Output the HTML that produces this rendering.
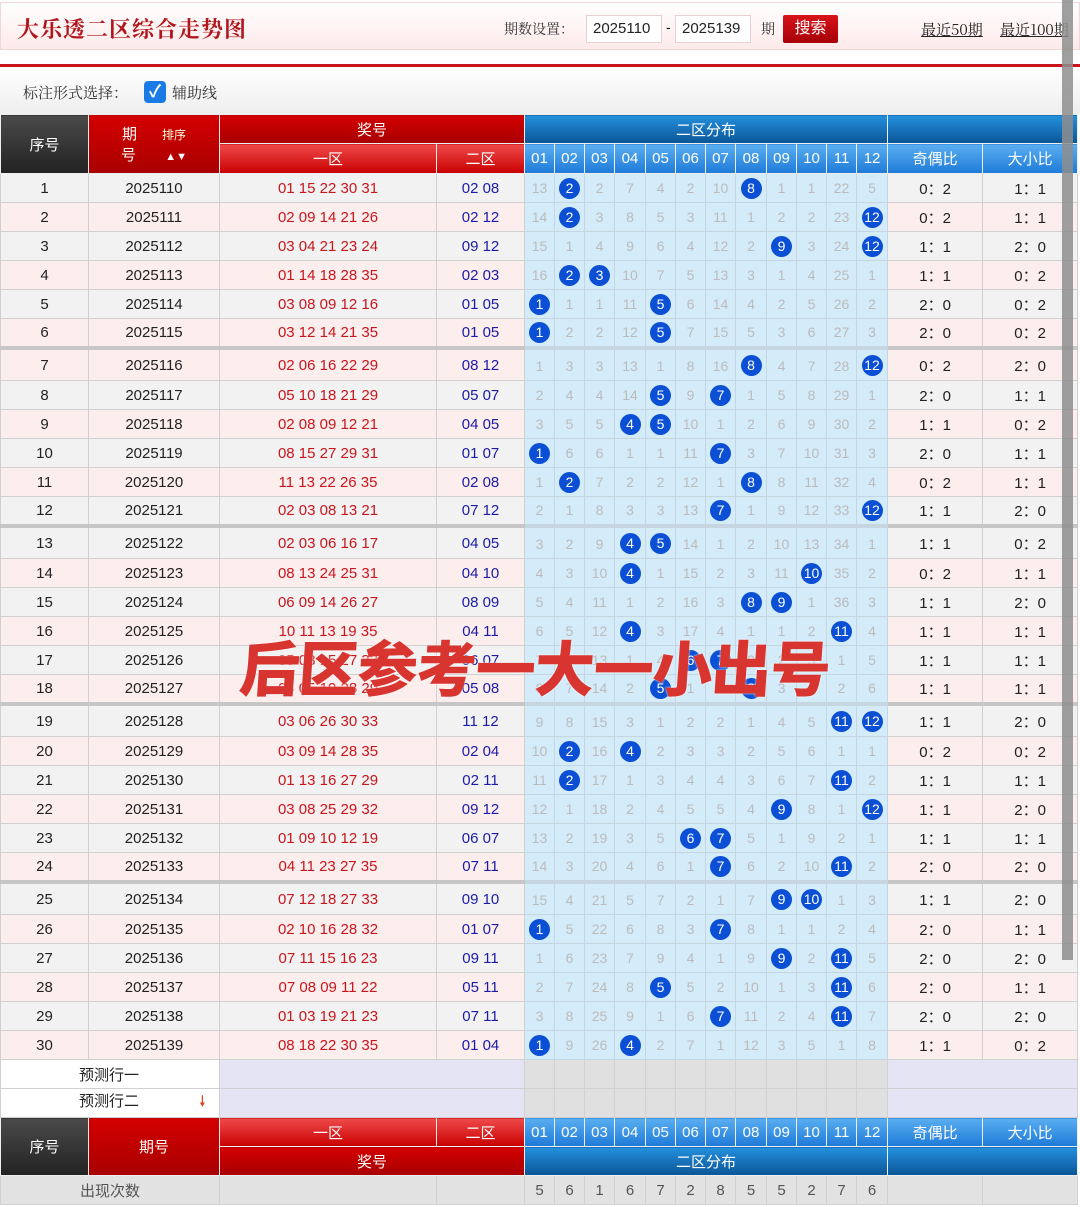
<!DOCTYPE html>
<html><head><meta charset="utf-8"><style>
*{margin:0;padding:0;box-sizing:border-box}
body{width:1080px;height:1207px;overflow:hidden;background:#fff;font-family:"Liberation Sans","Noto Sans CJK SC",sans-serif;position:relative}
.top{position:absolute;left:0;top:2px;width:1080px;height:48px;border:1px solid #f0d8d8;background:linear-gradient(#fff,#fdeaea)}
.title{position:absolute;left:16px;top:10px;font-size:22px;color:#b0161c;font-family:"Noto Serif CJK SC","Noto Sans CJK SC",serif;font-weight:bold;letter-spacing:1px}
.qs{position:absolute;left:503px;top:16px;font-size:14px;color:#333;font-family:"Noto Serif CJK SC",serif}
.inp{position:absolute;top:12px;height:28px;width:76px;background:#fff;border:1px solid #ead0d0;font-size:15px;line-height:26px;padding-left:6px;color:#222}
.btn{position:absolute;left:782px;top:12px;width:55px;height:28px;background:linear-gradient(#d7141a,#a60008);color:#fff;font-size:16px;text-align:center;line-height:27px;border-radius:2px}
.lnk{position:absolute;top:16px;font-size:15px;color:#222;text-decoration:underline;font-family:"Noto Serif CJK SC",serif}
.redline{position:absolute;left:0;top:64px;width:1080px;height:3px;background:#c8141b}
.opt{position:absolute;left:0;top:67px;width:1080px;height:47px;background:linear-gradient(#fff,#eee)}
.opt span{position:absolute;top:15px;font-size:15px;color:#333;font-family:"Noto Serif CJK SC",serif}
.cb{position:absolute;left:144px;top:81px;width:22px;height:22px;background:#1a7be6;border-radius:4px;color:#fff;font-size:17px;text-align:center;line-height:22px;font-weight:bold}
table{position:absolute;left:0;top:114px;border-collapse:collapse;table-layout:fixed;width:1077px}
td{border:1px solid #d0d0d0;text-align:center;font-size:15px;color:#222;height:29px;padding:0;white-space:nowrap;overflow:hidden}
.h td{color:#fff;border-color:#eee;font-size:15px}
.dk{background:linear-gradient(#4a4a4a,#222)}
.rd{background:linear-gradient(#d40000,#a80000)}
.lr{background:linear-gradient(#ef4a4a,#c80000)}
.db{background:linear-gradient(#2590de,#0a5597)}
.lb{background:linear-gradient(#5aaef0,#1e7ad8)}
.f{color:#c8161d}.k{color:#1b1ba8}
tr.o td{background:#f2f2f2}tr.e td{background:#fdeeee}
tr.d td:nth-child(n+5):nth-child(-n+16){background:#d4ebfa;color:#bbb;border-color:#c6d6e0;font-size:14px}
tr.d td b{display:inline-block;width:21px;height:21px;border-radius:50%;background:#0b4fd4;color:#fff;font-weight:normal;font-size:14px;line-height:21px}
tr.s td{border-top:4px solid #c6c6c6;height:33px;padding-top:2px}
.p td{background:#e4e4f4;height:29px}
.p td.w{background:#fff;text-align:left;padding-left:78px}
.p td.g{background:#e0e0e0}
.c td{background:#e2e2e2;color:#555}
.wm{position:absolute;left:240px;top:622px;font-size:60px;font-weight:900;color:#d83430;font-family:"Noto Sans CJK SC",sans-serif;letter-spacing:-1px;transform:skewX(-4deg);text-shadow:0 0 2px #fff}
.sb{position:absolute;left:1062px;top:0;width:11px;height:960px;background:#8e8e8e;opacity:.85}
</style></head><body>
<div class="top"><div class="title">大乐透二区综合走势图</div>
<div class="qs">期数设置：</div>
<div class="inp" style="left:585px">2025110</div><div style="position:absolute;left:665px;top:16px;font-size:14px">-</div>
<div class="inp" style="left:674px">2025139</div><div class="qs" style="left:760px">期</div>
<div class="btn">搜索</div>
<div class="lnk" style="left:920px">最近50期</div><div class="lnk" style="left:999px">最近100期</div></div>
<div class="redline"></div>
<div class="opt"><span style="left:23px">标注形式选择：</span><span style="left:172px">辅助线</span></div>
<div class="cb">✓</div>
<table>
<colgroup><col style="width:88px"><col style="width:131px"><col style="width:217px"><col style="width:88px"><col style="width:30px"><col style="width:30px"><col style="width:30px"><col style="width:31px"><col style="width:30px"><col style="width:30px"><col style="width:30px"><col style="width:31px"><col style="width:30px"><col style="width:30px"><col style="width:30px"><col style="width:31px"><col style="width:95px"><col style="width:95px"></colgroup>
<tr class="h"><td rowspan="2" class="dk" style="height:28px">序号</td><td rowspan="2" class="rd">期&nbsp;&nbsp;&nbsp;&nbsp;&nbsp;&nbsp;<span style="font-size:12px;color:#ffd">排序</span><br>号&nbsp;&nbsp;&nbsp;&nbsp;&nbsp;&nbsp;&nbsp;<span style="font-size:11px">▲▼</span></td><td colspan="2" class="rd">奖号</td><td colspan="12" class="db">二区分布</td><td colspan="2" class="db"></td></tr>
<tr class="h"><td class="lr" style="height:30px">一区</td><td class="lr">二区</td><td class="lb">01</td><td class="lb">02</td><td class="lb">03</td><td class="lb">04</td><td class="lb">05</td><td class="lb">06</td><td class="lb">07</td><td class="lb">08</td><td class="lb">09</td><td class="lb">10</td><td class="lb">11</td><td class="lb">12</td><td class="lb">奇偶比</td><td class="lb">大小比</td></tr>
<tr class="d o"><td>1</td><td>2025110</td><td class="f">01 15 22 30 31</td><td class="k">02 08</td><td>13</td><td><b>2</b></td><td>2</td><td>7</td><td>4</td><td>2</td><td>10</td><td><b>8</b></td><td>1</td><td>1</td><td>22</td><td>5</td><td>0：2</td><td>1：1</td></tr>
<tr class="d e"><td>2</td><td>2025111</td><td class="f">02 09 14 21 26</td><td class="k">02 12</td><td>14</td><td><b>2</b></td><td>3</td><td>8</td><td>5</td><td>3</td><td>11</td><td>1</td><td>2</td><td>2</td><td>23</td><td><b>12</b></td><td>0：2</td><td>1：1</td></tr>
<tr class="d o"><td>3</td><td>2025112</td><td class="f">03 04 21 23 24</td><td class="k">09 12</td><td>15</td><td>1</td><td>4</td><td>9</td><td>6</td><td>4</td><td>12</td><td>2</td><td><b>9</b></td><td>3</td><td>24</td><td><b>12</b></td><td>1：1</td><td>2：0</td></tr>
<tr class="d e"><td>4</td><td>2025113</td><td class="f">01 14 18 28 35</td><td class="k">02 03</td><td>16</td><td><b>2</b></td><td><b>3</b></td><td>10</td><td>7</td><td>5</td><td>13</td><td>3</td><td>1</td><td>4</td><td>25</td><td>1</td><td>1：1</td><td>0：2</td></tr>
<tr class="d o"><td>5</td><td>2025114</td><td class="f">03 08 09 12 16</td><td class="k">01 05</td><td><b>1</b></td><td>1</td><td>1</td><td>11</td><td><b>5</b></td><td>6</td><td>14</td><td>4</td><td>2</td><td>5</td><td>26</td><td>2</td><td>2：0</td><td>0：2</td></tr>
<tr class="d e"><td>6</td><td>2025115</td><td class="f">03 12 14 21 35</td><td class="k">01 05</td><td><b>1</b></td><td>2</td><td>2</td><td>12</td><td><b>5</b></td><td>7</td><td>15</td><td>5</td><td>3</td><td>6</td><td>27</td><td>3</td><td>2：0</td><td>0：2</td></tr>
<tr class="d e s"><td>7</td><td>2025116</td><td class="f">02 06 16 22 29</td><td class="k">08 12</td><td>1</td><td>3</td><td>3</td><td>13</td><td>1</td><td>8</td><td>16</td><td><b>8</b></td><td>4</td><td>7</td><td>28</td><td><b>12</b></td><td>0：2</td><td>2：0</td></tr>
<tr class="d o"><td>8</td><td>2025117</td><td class="f">05 10 18 21 29</td><td class="k">05 07</td><td>2</td><td>4</td><td>4</td><td>14</td><td><b>5</b></td><td>9</td><td><b>7</b></td><td>1</td><td>5</td><td>8</td><td>29</td><td>1</td><td>2：0</td><td>1：1</td></tr>
<tr class="d e"><td>9</td><td>2025118</td><td class="f">02 08 09 12 21</td><td class="k">04 05</td><td>3</td><td>5</td><td>5</td><td><b>4</b></td><td><b>5</b></td><td>10</td><td>1</td><td>2</td><td>6</td><td>9</td><td>30</td><td>2</td><td>1：1</td><td>0：2</td></tr>
<tr class="d o"><td>10</td><td>2025119</td><td class="f">08 15 27 29 31</td><td class="k">01 07</td><td><b>1</b></td><td>6</td><td>6</td><td>1</td><td>1</td><td>11</td><td><b>7</b></td><td>3</td><td>7</td><td>10</td><td>31</td><td>3</td><td>2：0</td><td>1：1</td></tr>
<tr class="d e"><td>11</td><td>2025120</td><td class="f">11 13 22 26 35</td><td class="k">02 08</td><td>1</td><td><b>2</b></td><td>7</td><td>2</td><td>2</td><td>12</td><td>1</td><td><b>8</b></td><td>8</td><td>11</td><td>32</td><td>4</td><td>0：2</td><td>1：1</td></tr>
<tr class="d o"><td>12</td><td>2025121</td><td class="f">02 03 08 13 21</td><td class="k">07 12</td><td>2</td><td>1</td><td>8</td><td>3</td><td>3</td><td>13</td><td><b>7</b></td><td>1</td><td>9</td><td>12</td><td>33</td><td><b>12</b></td><td>1：1</td><td>2：0</td></tr>
<tr class="d o s"><td>13</td><td>2025122</td><td class="f">02 03 06 16 17</td><td class="k">04 05</td><td>3</td><td>2</td><td>9</td><td><b>4</b></td><td><b>5</b></td><td>14</td><td>1</td><td>2</td><td>10</td><td>13</td><td>34</td><td>1</td><td>1：1</td><td>0：2</td></tr>
<tr class="d e"><td>14</td><td>2025123</td><td class="f">08 13 24 25 31</td><td class="k">04 10</td><td>4</td><td>3</td><td>10</td><td><b>4</b></td><td>1</td><td>15</td><td>2</td><td>3</td><td>11</td><td><b>10</b></td><td>35</td><td>2</td><td>0：2</td><td>1：1</td></tr>
<tr class="d o"><td>15</td><td>2025124</td><td class="f">06 09 14 26 27</td><td class="k">08 09</td><td>5</td><td>4</td><td>11</td><td>1</td><td>2</td><td>16</td><td>3</td><td><b>8</b></td><td><b>9</b></td><td>1</td><td>36</td><td>3</td><td>1：1</td><td>2：0</td></tr>
<tr class="d e"><td>16</td><td>2025125</td><td class="f">10 11 13 19 35</td><td class="k">04 11</td><td>6</td><td>5</td><td>12</td><td><b>4</b></td><td>3</td><td>17</td><td>4</td><td>1</td><td>1</td><td>2</td><td><b>11</b></td><td>4</td><td>1：1</td><td>1：1</td></tr>
<tr class="d o"><td>17</td><td>2025126</td><td class="f">05 08 15 27 33</td><td class="k">06 07</td><td>7</td><td>6</td><td>13</td><td>1</td><td>4</td><td><b>6</b></td><td><b>7</b></td><td>2</td><td>2</td><td>3</td><td>1</td><td>5</td><td>1：1</td><td>1：1</td></tr>
<tr class="d e"><td>18</td><td>2025127</td><td class="f">04 05 19 28 29</td><td class="k">05 08</td><td>8</td><td>7</td><td>14</td><td>2</td><td><b>5</b></td><td>1</td><td>1</td><td><b>8</b></td><td>3</td><td>4</td><td>2</td><td>6</td><td>1：1</td><td>1：1</td></tr>
<tr class="d o s"><td>19</td><td>2025128</td><td class="f">03 06 26 30 33</td><td class="k">11 12</td><td>9</td><td>8</td><td>15</td><td>3</td><td>1</td><td>2</td><td>2</td><td>1</td><td>4</td><td>5</td><td><b>11</b></td><td><b>12</b></td><td>1：1</td><td>2：0</td></tr>
<tr class="d e"><td>20</td><td>2025129</td><td class="f">03 09 14 28 35</td><td class="k">02 04</td><td>10</td><td><b>2</b></td><td>16</td><td><b>4</b></td><td>2</td><td>3</td><td>3</td><td>2</td><td>5</td><td>6</td><td>1</td><td>1</td><td>0：2</td><td>0：2</td></tr>
<tr class="d o"><td>21</td><td>2025130</td><td class="f">01 13 16 27 29</td><td class="k">02 11</td><td>11</td><td><b>2</b></td><td>17</td><td>1</td><td>3</td><td>4</td><td>4</td><td>3</td><td>6</td><td>7</td><td><b>11</b></td><td>2</td><td>1：1</td><td>1：1</td></tr>
<tr class="d e"><td>22</td><td>2025131</td><td class="f">03 08 25 29 32</td><td class="k">09 12</td><td>12</td><td>1</td><td>18</td><td>2</td><td>4</td><td>5</td><td>5</td><td>4</td><td><b>9</b></td><td>8</td><td>1</td><td><b>12</b></td><td>1：1</td><td>2：0</td></tr>
<tr class="d o"><td>23</td><td>2025132</td><td class="f">01 09 10 12 19</td><td class="k">06 07</td><td>13</td><td>2</td><td>19</td><td>3</td><td>5</td><td><b>6</b></td><td><b>7</b></td><td>5</td><td>1</td><td>9</td><td>2</td><td>1</td><td>1：1</td><td>1：1</td></tr>
<tr class="d e"><td>24</td><td>2025133</td><td class="f">04 11 23 27 35</td><td class="k">07 11</td><td>14</td><td>3</td><td>20</td><td>4</td><td>6</td><td>1</td><td><b>7</b></td><td>6</td><td>2</td><td>10</td><td><b>11</b></td><td>2</td><td>2：0</td><td>2：0</td></tr>
<tr class="d o s"><td>25</td><td>2025134</td><td class="f">07 12 18 27 33</td><td class="k">09 10</td><td>15</td><td>4</td><td>21</td><td>5</td><td>7</td><td>2</td><td>1</td><td>7</td><td><b>9</b></td><td><b>10</b></td><td>1</td><td>3</td><td>1：1</td><td>2：0</td></tr>
<tr class="d e"><td>26</td><td>2025135</td><td class="f">02 10 16 28 32</td><td class="k">01 07</td><td><b>1</b></td><td>5</td><td>22</td><td>6</td><td>8</td><td>3</td><td><b>7</b></td><td>8</td><td>1</td><td>1</td><td>2</td><td>4</td><td>2：0</td><td>1：1</td></tr>
<tr class="d o"><td>27</td><td>2025136</td><td class="f">07 11 15 16 23</td><td class="k">09 11</td><td>1</td><td>6</td><td>23</td><td>7</td><td>9</td><td>4</td><td>1</td><td>9</td><td><b>9</b></td><td>2</td><td><b>11</b></td><td>5</td><td>2：0</td><td>2：0</td></tr>
<tr class="d e"><td>28</td><td>2025137</td><td class="f">07 08 09 11 22</td><td class="k">05 11</td><td>2</td><td>7</td><td>24</td><td>8</td><td><b>5</b></td><td>5</td><td>2</td><td>10</td><td>1</td><td>3</td><td><b>11</b></td><td>6</td><td>2：0</td><td>1：1</td></tr>
<tr class="d o"><td>29</td><td>2025138</td><td class="f">01 03 19 21 23</td><td class="k">07 11</td><td>3</td><td>8</td><td>25</td><td>9</td><td>1</td><td>6</td><td><b>7</b></td><td>11</td><td>2</td><td>4</td><td><b>11</b></td><td>7</td><td>2：0</td><td>2：0</td></tr>
<tr class="d e"><td>30</td><td>2025139</td><td class="f">08 18 22 30 35</td><td class="k">01 04</td><td><b>1</b></td><td>9</td><td>26</td><td><b>4</b></td><td>2</td><td>7</td><td>1</td><td>12</td><td>3</td><td>5</td><td>1</td><td>8</td><td>1：1</td><td>0：2</td></tr>
<tr class="p"><td colspan="2" class="w">预测行一</td><td colspan="2"></td><td class="g"></td><td class="g"></td><td class="g"></td><td class="g"></td><td class="g"></td><td class="g"></td><td class="g"></td><td class="g"></td><td class="g"></td><td class="g"></td><td class="g"></td><td class="g"></td><td colspan="2"></td></tr>
<tr class="p"><td colspan="2" class="w">预测行二 <span style="color:#e04010;margin-left:56px">🠗</span></td><td colspan="2"></td><td class="g"></td><td class="g"></td><td class="g"></td><td class="g"></td><td class="g"></td><td class="g"></td><td class="g"></td><td class="g"></td><td class="g"></td><td class="g"></td><td class="g"></td><td class="g"></td><td colspan="2"></td></tr>
<tr class="h"><td rowspan="2" class="dk">序号</td><td rowspan="2" class="rd">期号</td><td class="lr">一区</td><td class="lr">二区</td><td class="lb">01</td><td class="lb">02</td><td class="lb">03</td><td class="lb">04</td><td class="lb">05</td><td class="lb">06</td><td class="lb">07</td><td class="lb">08</td><td class="lb">09</td><td class="lb">10</td><td class="lb">11</td><td class="lb">12</td><td class="lb">奇偶比</td><td class="lb">大小比</td></tr>
<tr class="h"><td colspan="2" class="rd">奖号</td><td colspan="12" class="db">二区分布</td><td colspan="2" class="db"></td></tr>
<tr class="c"><td colspan="2">出现次数</td><td></td><td></td><td>5</td><td>6</td><td>1</td><td>6</td><td>7</td><td>2</td><td>8</td><td>5</td><td>5</td><td>2</td><td>7</td><td>6</td><td></td><td></td></tr>
</table>
<div class="wm">后区参考一大一小出号</div>
<div class="sb"></div>
</body></html>
